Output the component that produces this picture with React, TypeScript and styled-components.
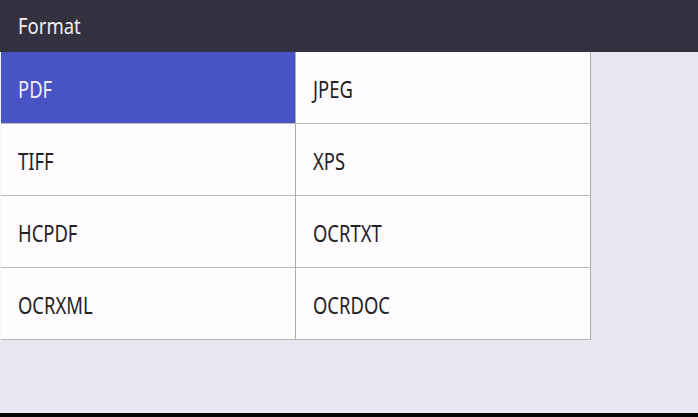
import React from "react";
import styled, { createGlobalStyle } from "styled-components";

const GlobalStyle = createGlobalStyle`
  html, body {
    margin: 0;
    padding: 0;
  }
  body {
    font-family: "Noto Sans", "Open Sans", sans-serif;
  }
`;

const Screen = styled.div`
  width: 698px;
  height: 417px;
  display: flex;
  flex-direction: column;
  background: #e6e7ef;
  overflow: hidden;
`;

const Header = styled.div`
  box-sizing: border-box;
  height: 52px;
  padding: 1px 18px 0;
  display: flex;
  align-items: center;

  background: #33313f;
  color: #f0f0f3;
`;

// the panel font is tall and narrow, so the label is squeezed sideways
const Label = styled.span<{ $size: number; $squeeze: number }>`
  display: inline-block;
  font-size: ${p => p.$size}px;
  line-height: 1;
  transform: scaleX(${p => p.$squeeze});
  transform-origin: left center;
  white-space: nowrap;
`;

const Body = styled.div`
  flex: 1;
`;

const FormatGrid = styled.div`
  width: 590px;
  display: grid;
  grid-template-columns: 295px 295px;
  border-left: 1px solid #f7f6fa;
`;

const FormatCell = styled.div<{ $selected?: boolean }>`
  box-sizing: border-box;
  height: 72px;
  padding: 3px 0 0 17px;
  border-right: 1px solid #ababab;
  border-bottom: 1px solid #b8b8b8;

  display: flex;
  align-items: center;

  background: ${p => (p.$selected ? "#4853c6" : "#fefcff")};
  color: ${p => (p.$selected ? "#eeeefa" : "#222226")};
`;

const BottomBar = styled.div`
  height: 4px;
  background: #050505;
`;

const formats = ["PDF", "JPEG", "TIFF", "XPS", "HCPDF", "OCRTXT", "OCRXML", "OCRDOC"];

const App = () => {
    const selected = "PDF";

    return (
        <Screen>
            <GlobalStyle />
            <Header>
                <Label $size={21} $squeeze={0.88}>Format</Label>
            </Header>
            <Body>
                <FormatGrid>
                    {formats.map(name =>
                        <FormatCell key={name} $selected={name === selected}>
                            <Label $size={23} $squeeze={0.8}>{name}</Label>
                        </FormatCell>
                    )}
                </FormatGrid>
            </Body>
            <BottomBar />
        </Screen>
    );
};

export default App;
